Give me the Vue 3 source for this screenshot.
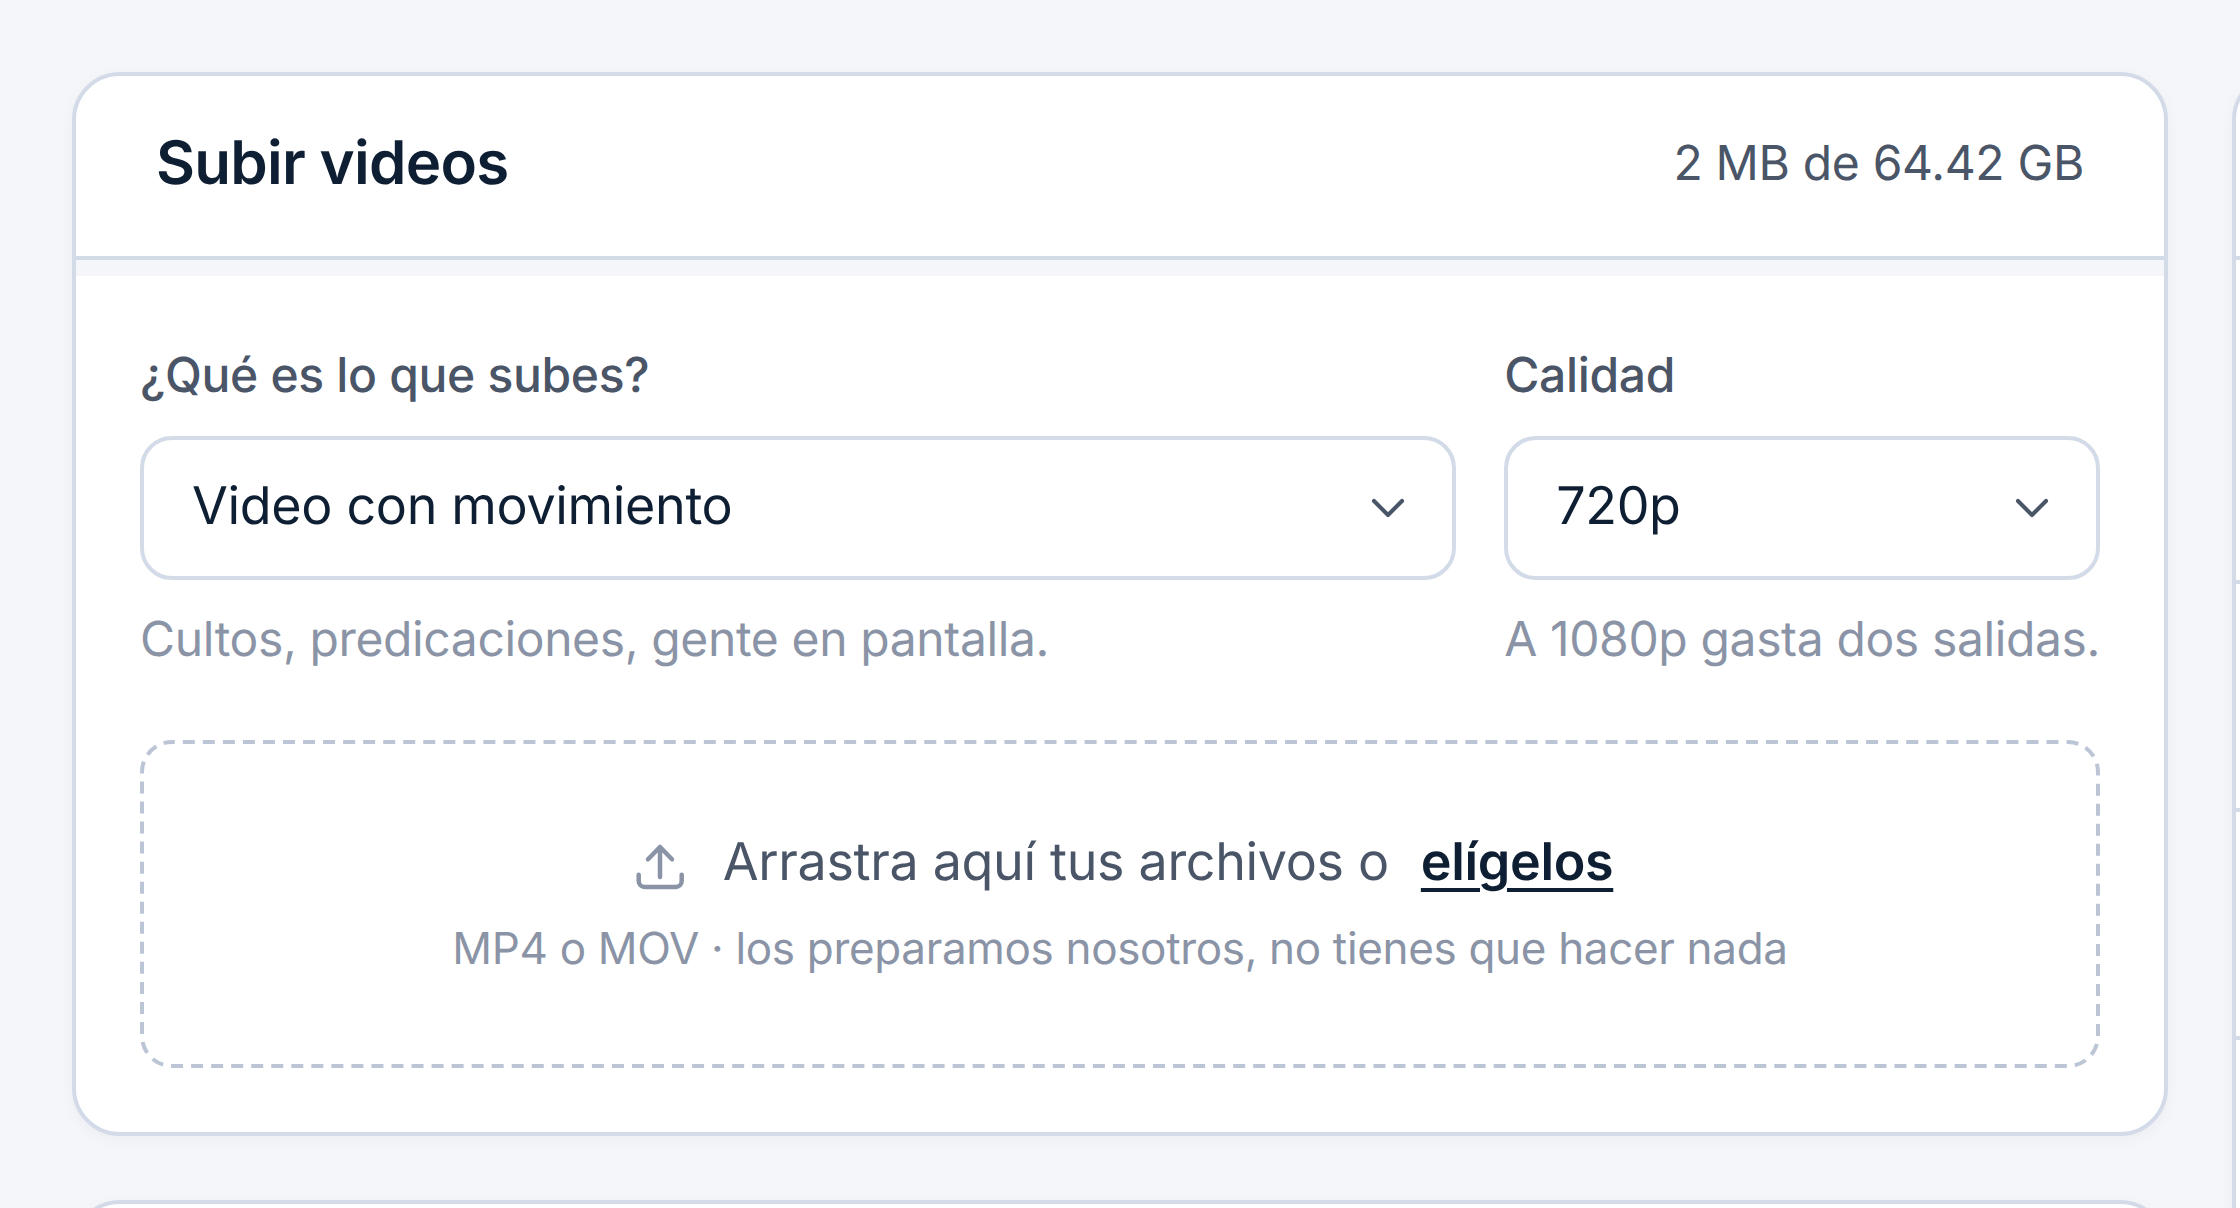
<template>
  <div class="page">
    <div class="main-col">
      <section class="card">
        <header class="card-head">
          <h2>Subir videos</h2>
          <span class="quota">2 MB de 64.42 GB</span>
        </header>
        <div class="card-body">
          <div class="fields">
            <div class="field">
              <label>¿Qué es lo que subes?</label>
              <div class="select">
                <span>Video con movimiento</span>
                <svg class="chevron" viewBox="0 0 24 24" fill="none"><path d="M6 9l6 6 6-6" /></svg>
              </div>
              <p class="hint">Cultos, predicaciones, gente en pantalla.</p>
            </div>
            <div class="field">
              <label>Calidad</label>
              <div class="select">
                <span>720p</span>
                <svg class="chevron" viewBox="0 0 24 24" fill="none"><path d="M6 9l6 6 6-6" /></svg>
              </div>
              <p class="hint">A 1080p gasta dos salidas.</p>
            </div>
          </div>
          <div class="dropzone">
            <!-- dashes drawn by hand, border: dashed gives shorter ones at this width -->
            <svg class="dash-frame" fill="none"><rect x="2" y="2" rx="30" ry="30" /></svg>
            <div class="drop-line">
              <svg class="upload" viewBox="0 0 64 64" fill="none">
                <path d="M11.700 44.700V51a6 6 0 0 0 6 6h31a6 6 0 0 0 6-6v-6.300M33 47V17M21 29.300L33 17l12 12.300" />
              </svg>
              <span>Arrastra aquí tus archivos o</span>
              <a class="pick">elígelos</a>
            </div>
            <p class="drop-note">MP4 o MOV · los preparamos nosotros, no tienes que hacer nada</p>
          </div>
        </div>
      </section>
      <section class="card next-card"></section>
    </div>
    <aside class="side-card">
      <div v-for="row in rows" :key="row.id" class="side-row" :style="{ height: row.height + 'px' }"></div>
    </aside>
  </div>
</template>

<script setup>
const rows = [
  { id: 'head', height: 180 },
  { id: 'a', height: 320 },
  { id: 'b', height: 224 },
  { id: 'c', height: 224 },
  { id: 'd', height: 224 }
]
</script>

<style scoped>
.page {
  display: flex;
  gap: 64px;
  height: 1208px;
  padding: 72px 0 0 72px;
  box-sizing: border-box;
  overflow: hidden;
  background: #f4f6fa;
  font-family: Inter, "Liberation Sans", sans-serif;
  text-rendering: geometricPrecision;
  letter-spacing: -0.33px;
}

.main-col {
  flex: 0 0 2096px;
  display: flex;
  flex-direction: column;
  gap: 64px;
}

.card {
  flex: none;
  background: #f4f6fa;
  border: 4px solid #d4dbe8;
  border-radius: 48px;
  box-shadow: 0 4px 16px rgba(15, 31, 51, 0.04);
  overflow: hidden;
}

.next-card {
  height: 400px;
  background: #fff;
}

.card-head {
  display: flex;
  align-items: center;
  justify-content: space-between;
  padding: 48px 80px 54px;
  background: #fff;
  border-bottom: 4px solid #d4dbe8;
}

.card-head h2 {
  margin: 0;
  font-size: 60px;
  line-height: 78px;
  font-weight: 600;
  letter-spacing: -0.72px;
  color: #0f1f33;
}

.quota {
  padding-bottom: 2px;
  font-size: 48px;
  color: #4a5568;
}

.card-body {
  margin-top: 16px;
  padding: 64px;
  background: #fff;
}

.fields {
  display: grid;
  grid-template-columns: 1fr auto;
  gap: 48px;
}

.field label {
  display: block;
  font-size: 48px;
  line-height: 70px;
  font-weight: 500;
  color: #4a5568;
}

.select {
  display: flex;
  align-items: center;
  justify-content: space-between;
  height: 144px;
  margin-top: 26px;
  padding: 0 36px 0 48px;
  box-sizing: border-box;
  border: 4px solid #d4dbe8;
  border-radius: 32px;
  background: #fff;
  font-size: 52px;
  color: #0f1f33;
}

.select span {
  padding-bottom: 6px;
}

.chevron {
  width: 56px;
  height: 56px;
  stroke: #4a5568;
  stroke-width: 1.75;
  stroke-linecap: round;
  stroke-linejoin: round;
}

.hint {
  margin: 23px 0 0;
  font-size: 48px;
  line-height: 72px;
  letter-spacing: -0.37px;
  color: #8a94a6;
  white-space: nowrap;
}

.dropzone {
  position: relative;
  margin-top: 65px;
  padding: 83px 84px 87px;
  display: flex;
  flex-direction: column;
  align-items: center;
}

.dash-frame {
  position: absolute;
  top: 0;
  left: 0;
  width: 100%;
  height: 100%;
}

.dash-frame rect {
  width: calc(100% - 4px);
  height: calc(100% - 4px);
  stroke: #bcc5d6;
  stroke-width: 4;
  stroke-dasharray: 12 8.04;
  stroke-dashoffset: -10.8;
}

.drop-line {
  display: flex;
  align-items: center;
  gap: 32px;
  font-size: 52px;
  line-height: 78px;
  color: #4a5568;
}

.upload {
  width: 64px;
  height: 64px;
  stroke: #8a94a6;
  stroke-width: 4.5;
  stroke-linecap: round;
  stroke-linejoin: round;
}

.pick {
  font-weight: 600;
  color: #0f1f33;
  text-decoration: underline;
  text-decoration-thickness: 4px;
  text-underline-offset: 8px;
}

.drop-note {
  margin: 14px 0 0;
  font-size: 44px;
  line-height: 66px;
  color: #8a94a6;
}

.side-card {
  flex: none;
  width: 400px;
  height: 1300px;
  background: #fff;
  border: 4px solid #d4dbe8;
  border-radius: 48px;
  box-shadow: 0 4px 16px rgba(15, 31, 51, 0.04);
}

.side-row {
  border-bottom: 4px solid #d4dbe8;
}
</style>

<style>
html, body {
  background: #f4f6fa;
}
</style>
